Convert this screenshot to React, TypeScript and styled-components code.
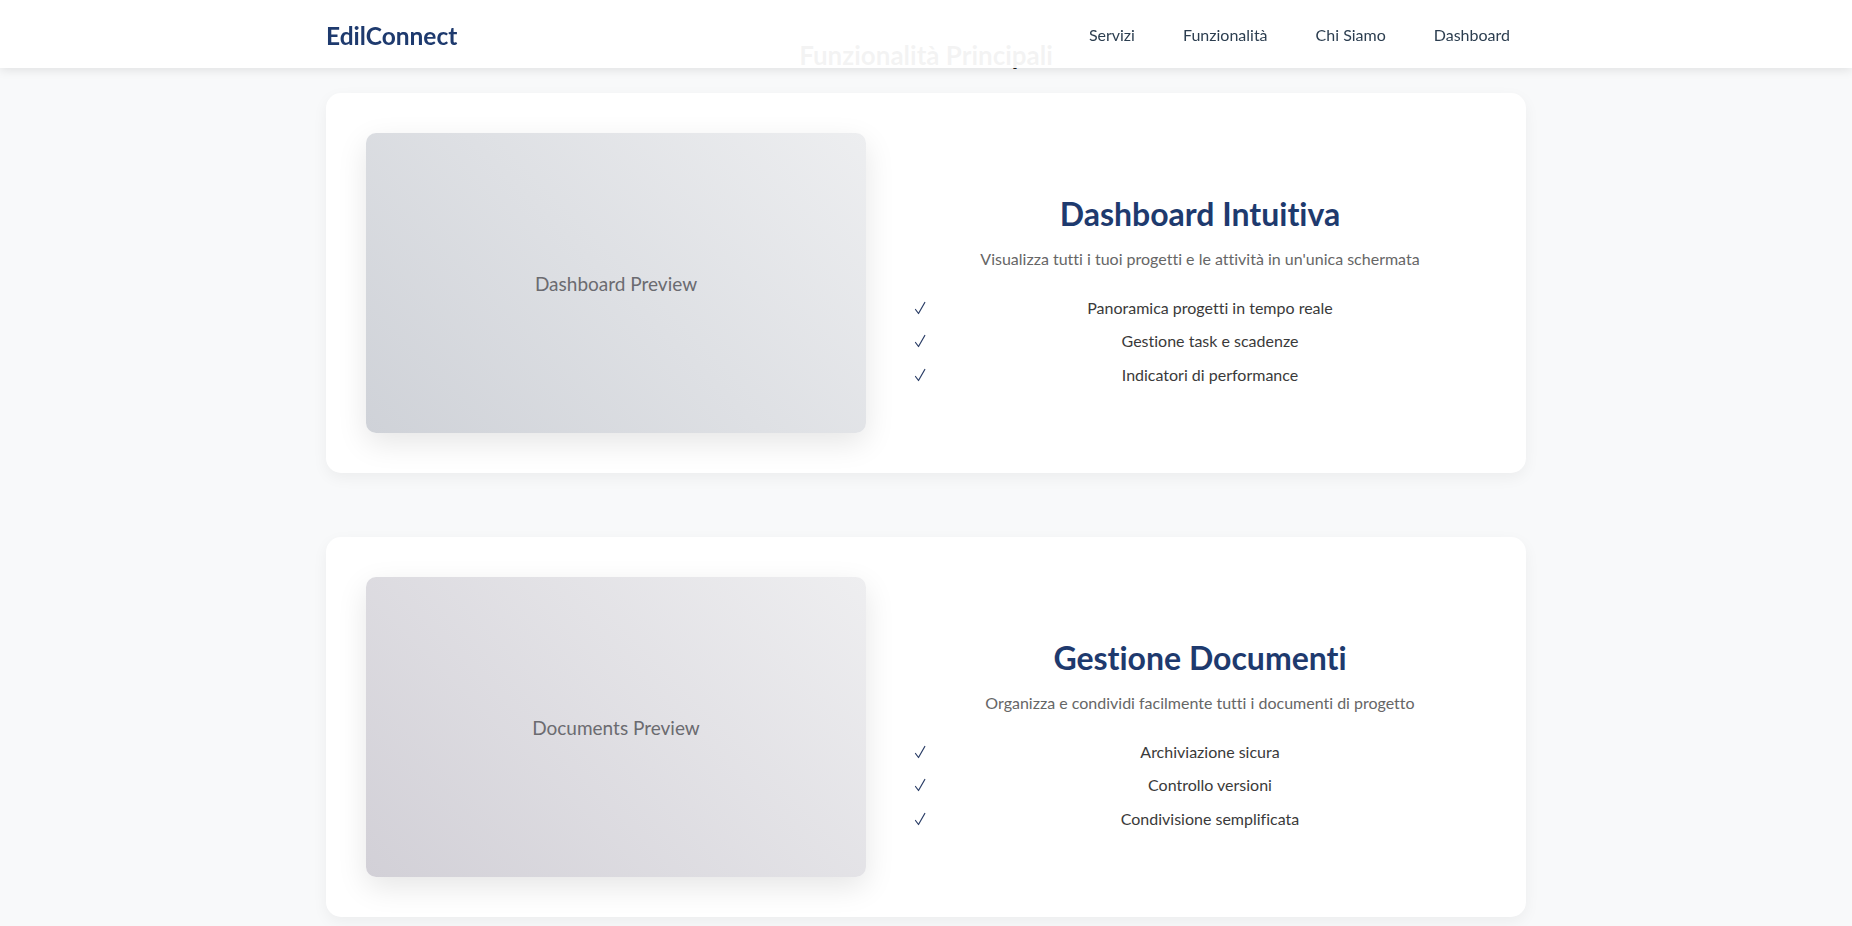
import React from 'react';
import styled, { createGlobalStyle } from 'styled-components';

const GlobalStyle = createGlobalStyle`
  * {
    box-sizing: border-box;
  }
  body {
    margin: 0;
    background-color: #f8f9fa;
    font-family: Lato, 'Open Sans', sans-serif;
    font-variant-ligatures: none;
    color: #333;
  }
`;

const Header = styled.header`
  position: fixed;
  top: 0;
  left: 0;
  width: 100%;
  height: 68px;
  background-color: rgba(255, 255, 255, 0.95);
  box-shadow: 0 2px 10px rgba(0, 0, 0, 0.1);
  z-index: 1000;
`;

const HeaderInner = styled.div`
  max-width: 1200px;
  height: 100%;
  margin: 0 auto;
  display: flex;
  align-items: center;
  justify-content: space-between;
`;

const Logo = styled.div`
  font-size: 24.5px;
  font-weight: 700;
  color: #1e3a6e;
  padding-top: 2px;
`;

const Nav = styled.nav`
  display: flex;
  gap: 16px;
`;

const NavLink = styled.a`
  padding: 8px 16px;
  font-size: 16px;
  color: #2c3e50;
  text-decoration: none;
  cursor: pointer;
`;

const Main = styled.main`
  padding-top: 40px;
`;

const Section = styled.section`
  max-width: 1200px;
  margin: 0 auto;
`;

const SectionTitle = styled.h2`
  margin: 0 0 22px;
  font-size: 26px;
  line-height: 1.2;
  font-weight: 700;
  text-align: center;
  color: #1a1a1a;
`;

const FeatureCard = styled.div`
  display: flex;
  align-items: center;
  gap: 48px;
  padding: 40px;
  margin-bottom: 64px;
  background-color: #ffffff;
  border-radius: 15px;
  box-shadow: 0 5px 15px rgba(0, 0, 0, 0.05);
`;

const Preview = styled.div<{ $from: string; $to: string }>`
  flex: 0 0 500px;
  height: 300px;
  display: flex;
  align-items: center;
  justify-content: center;
  border-radius: 10px;
  background: linear-gradient(45deg, ${({ $from }) => $from}, ${({ $to }) => $to});
  box-shadow: 0 10px 30px rgba(0, 0, 0, 0.1);
  font-size: 19px;
  color: #6b6b70;
`;

const FeatureText = styled.div`
  flex: 1;
  padding-top: 20px;
  text-align: center;
`;

const FeatureTitle = styled.h3`
  margin: 0 0 13px;
  font-size: 32px;
  line-height: 1.2;
  font-weight: 700;
  color: #1e3a6e;
`;

const FeatureDesc = styled.p`
  margin: 0 0 19px;
  font-size: 16px;
  line-height: 1.6;
  color: #666;
`;

const FeatureList = styled.ul`
  list-style: none;
  margin: 0;
  padding: 0;
`;

const FeatureItem = styled.li`
  display: flex;
  align-items: center;
  gap: 8px;
  padding: 4px 0;
  font-size: 16px;
  line-height: 1.6;
  color: #3a3a3a;
`;

const Check = styled.svg`
  flex: 0 0 12px;
  width: 12px;
  height: 14px;
`;

const ItemText = styled.span`
  flex: 1;
  text-align: center;
`;

const CheckIcon = () => (
  <Check viewBox="0 0 12 14" fill="none">
    <path d="M1.5 8.5 L4.5 12.5 L10.8 1.5" stroke="#2a3d66" strokeWidth="1.2" strokeLinecap="round" strokeLinejoin="round" />
  </Check>
);

const features = [
  {
    preview: 'Dashboard Preview',
    title: 'Dashboard Intuitiva',
    desc: "Visualizza tutti i tuoi progetti e le attività in un'unica schermata",
    items: ['Panoramica progetti in tempo reale', 'Gestione task e scadenze', 'Indicatori di performance'],
    from: '#cfd2d8',
    to: '#edeef0',
  },
  {
    preview: 'Documents Preview',
    title: 'Gestione Documenti',
    desc: 'Organizza e condividi facilmente tutti i documenti di progetto',
    items: ['Archiviazione sicura', 'Controllo versioni', 'Condivisione semplificata'],
    from: '#d2d0d7',
    to: '#eeeef0',
  },
];

const App: React.FC = () => {
  return (
    <>
      <GlobalStyle />
      <Header>
        <HeaderInner>
          <Logo>EdilConnect</Logo>
          <Nav>
            <NavLink>Servizi</NavLink>
            <NavLink>Funzionalità</NavLink>
            <NavLink>Chi Siamo</NavLink>
            <NavLink>Dashboard</NavLink>
          </Nav>
        </HeaderInner>
      </Header>
      <Main>
        <Section>
          <SectionTitle>Funzionalità Principali</SectionTitle>
          {features.map((f) => (
            <FeatureCard key={f.title}>
              <Preview $from={f.from} $to={f.to}>
                {f.preview}
              </Preview>
              <FeatureText>
                <FeatureTitle>{f.title}</FeatureTitle>
                <FeatureDesc>{f.desc}</FeatureDesc>
                <FeatureList>
                  {f.items.map((item) => (
                    <FeatureItem key={item}>
                      <CheckIcon />
                      <ItemText>{item}</ItemText>
                    </FeatureItem>
                  ))}
                </FeatureList>
              </FeatureText>
            </FeatureCard>
          ))}
        </Section>
      </Main>
    </>
  );
};

export default App;
